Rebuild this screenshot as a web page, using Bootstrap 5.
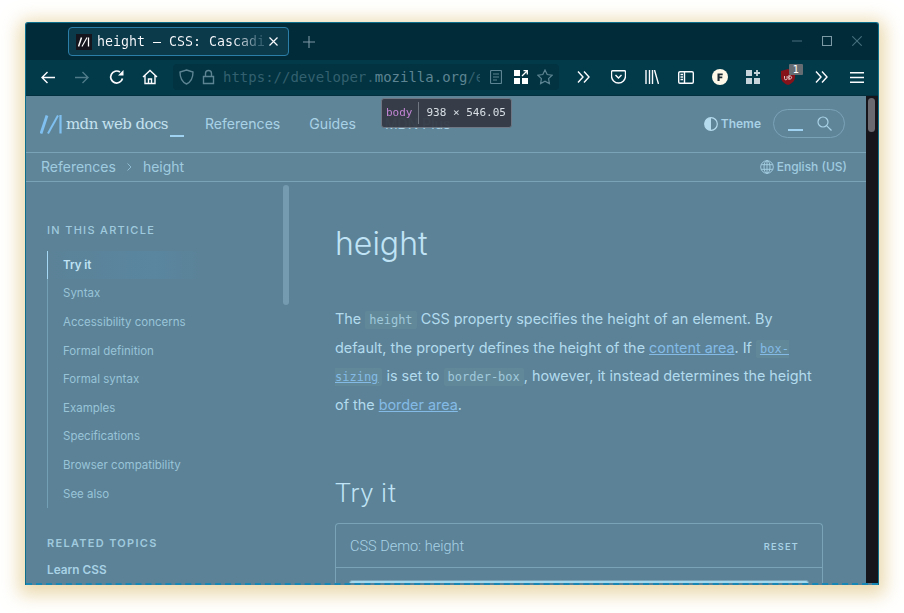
<!doctype html>
<html lang="en"><head><meta charset="utf-8"><title>height</title>
<link href="https://cdn.jsdelivr.net/npm/bootstrap@5.3.0/dist/css/bootstrap.min.css" rel="stylesheet">
<style>
html,body{height:613px;overflow:hidden;background:#fff}
body{padding:22px 25px 28px;font-family:Inter,"Liberation Sans",sans-serif;color:#a9d2e6}
.win{width:854px;height:563px;border-radius:3px 3px 0 0;overflow:hidden;box-shadow:0 4px 18px 6px rgba(224,196,130,.65);background:#5b8297;border:1px solid #0d6f8c;border-bottom:0;position:relative}
.tabbar{height:37px;background:#022b3a;padding-left:42px;color:#fbfbfe}
.tabx{width:221px;height:29px;border:1px solid #2b7ea8;border-radius:4px;background:#0b3a4b;font:13.3px/27px "DejaVu Sans Mono",monospace;padding-left:7px;gap:5px;margin-top:4px;white-space:nowrap;overflow:hidden}
.fav{width:16px;height:16px;background:#15151d;flex:none}
.tabname{background:linear-gradient(90deg,#fbfbfe 0,#fbfbfe 82%,#3d6676 97%);-webkit-background-clip:text;background-clip:text;color:transparent;width:167px;overflow:hidden}
.toolbar{height:36px;background:#023a4a;border-bottom:1px solid #02303f;padding-left:15px}
.urlbar{width:386px;height:26px;background:#023340;border-radius:4px;margin-left:15px;padding-left:6px;font:14px "DejaVu Sans Mono",monospace;color:#33606f;white-space:nowrap;overflow:hidden}
.urlbar b{font-weight:400;color:#5d8492}
.urltxt{width:257px;overflow:hidden}
.ico{display:block;flex:none;fill:none;stroke:#fbfbfe;stroke-width:1.4}
.page{height:490px;overflow:hidden;position:relative;border-bottom:2px dashed #1787b5}
.mainp{width:841px;height:490px;overflow:hidden;position:relative;font-family:Inter,sans-serif}
.sbar{position:absolute;right:0;top:0;width:12px;height:490px;background:#15151b}
.sbar i{position:absolute;left:2px;top:2px;width:7px;height:34px;border-radius:4px;background:#6a6a70}
.mdnhead{height:57px;background:#5f8599;border-bottom:1px solid #7ba3b8;padding:0 22px 0 14px}
.logotxt{font:500 15px "DejaVu Serif","Liberation Serif",serif;letter-spacing:-.6px;color:#c5e2ef;margin-left:4px;padding-top:4px;white-space:nowrap}
.cur{display:inline-block;width:14px;height:2px;background:#9fd1f0;margin-left:2px;vertical-align:-8px}
.mnav{font-size:14.1px;color:#a9d2e6;margin-left:21px;gap:29px}
.themex{font-size:12px;font-weight:600;color:#a9d2e6;gap:3px}
.srch{width:72px;height:29px;border:1px solid #7ba3b8;border-radius:15px;margin-left:12px;padding:0 12px 0 14px}
.srch i{display:block;width:15px;height:2px;background:#9fd1f0;margin-top:12px}
.crumb{height:29px;background:#5f8599;border-bottom:1px solid #7ba3b8;padding:0 20px 0 15px;font-size:14px;color:#a0cce0}
.chev{margin:0 11px}
.lang{font-size:12px;font-weight:500;gap:3px}
.cols{height:404px}
.side{width:309px;flex:none;position:relative;padding:41px 0 0 21px;font-size:11.5px;color:#99c4d8}
.sthumb{position:absolute;left:257px;top:3px;width:6px;height:120px;border-radius:3px;background:#749bb0}
.eyebrow{font-size:11px;font-weight:500;letter-spacing:1.3px;line-height:14px;color:#a0cade}
.tocl{border-left:1px solid #74a0b5;margin:14px 0 0;padding:0;list-style:none;position:relative}
.tocl li{height:28.6px;line-height:29.6px;padding-left:15px}
.tocl li.on{font-weight:600;color:#c0e4f5;border-left:1px solid #a5d8f5;margin-left:-1px;background:linear-gradient(90deg,#5b8297,#5a86a0 70%,#5b8297);width:154px;line-height:29px}
.learn{font-size:11.8px;font-weight:600;line-height:15px;margin-top:13px;color:#a9d2e6}
.art{width:488px;flex:none;padding-top:43px}
.art h1{font:300 32px/38px Inter,sans-serif;color:#c0e4f5;margin:0 0 42px}
.art p{font:400 14.4px/28.8px Inter,sans-serif;color:#b3dbee;margin:0 0 57px}
.art code{font:12px "DejaVu Sans Mono",monospace;background:#618899;padding:2px 4px;color:#a0c9db;border-radius:2px}
.art a{color:#84bbe6}
.art a code{color:#84bbe6;text-decoration:underline}
.art h2{font:300 26.6px/32px Roboto,sans-serif;letter-spacing:.7px;color:#c0e4f5;margin:0 0 14px}
.demo{height:90px;border:1px solid #7ba3b8;border-bottom:0;border-radius:4px 4px 0 0}
.dhead{height:44px;border-bottom:1px solid #7ba3b8;padding:2px 23px 0 14px;font:300 14.5px Roboto,sans-serif}
.dhead span{font:500 9.5px Roboto,sans-serif;letter-spacing:1.4px}
.dinner{height:20px;margin:12px 13px 0;background:#a4d8ec;border:1px solid #7ba3b8;border-radius:3px 3px 0 0}
.tip{position:absolute;left:355px;top:2px;width:131px;height:30px;background:#343a45;border:1px solid #6e7681;border-radius:3px;font:11px/28px "DejaVu Sans Mono",monospace;color:#dfe3e8;padding-left:4px;opacity:.95}
.tip em{font-style:normal;color:#c985d8;padding-right:5px;border-right:1px solid #70767f;margin-right:8px;display:inline-block;line-height:22px}
.ub{position:absolute;left:8px;top:-5px;width:14px;height:11px;text-align:center;background:#666d72;color:#fff;font:10px/11px "DejaVu Sans",sans-serif;border-radius:1px}
</style></head><body>
<div class="win d-flex flex-column">
<div class="tabbar d-flex align-items-start">
 <div class="tabx d-flex align-items-center">
  <span class="fav d-flex align-items-center justify-content-center"><svg width="12" height="10" viewBox="0 0 12 10" fill="none" stroke="#fff"><path d="M.5 9.500 3.500.5" stroke-width="1.500"/><path d="M4 9.500 9 .5" stroke-width="1.100"/><path d="M10.500 .5V9.500" stroke-width="1.300"/></svg></span>
  <span class="tabname">height – CSS: Cascadia</span>
  <svg class="ico" width="9" height="9" viewBox="0 0 9 9" style="stroke-width:1.2"><path d="M.5.5l8 8M8.5.5l-8 8"/></svg>
 </div>
 <svg class="ico" style="margin:13px 0 0 14px;stroke:#7d98a4;stroke-width:1.1" width="12" height="12" viewBox="0 0 12 12"><path d="M6 0v12M0 6h12"/></svg>
 <div class="ms-auto d-flex align-items-center" style="gap:20px;margin:13px 16px 0 0">
  <svg class="ico" style="stroke:#466f7d;stroke-width:1.1" width="10" height="10" viewBox="0 0 10 10"><path d="M0 5h10"/></svg>
  <svg class="ico" style="stroke:#7c9aa6;stroke-width:1.1" width="10" height="10" viewBox="0 0 10 10"><path d="M.5.5h9v9H.5z"/></svg>
  <svg class="ico" style="stroke:#466f7d;stroke-width:1.1" width="10" height="10" viewBox="0 0 10 10"><path d="M.3.3l9.400 9.400M9.700.3l-9.400 9.400"/></svg>
 </div>
</div>
<div class="toolbar d-flex align-items-center">
 <svg class="ico" width="15" height="13" viewBox="0 0 15 13"><path d="M14 6.500H1M6.500 1 1 6.500l5.500 5.500"/></svg>
 <svg class="ico" style="margin-left:18px;stroke:#4f7a88" width="15" height="13" viewBox="0 0 15 13"><path d="M1 6.500h13M8.500 1l5.500 5.500-5.500 5.500"/></svg>
 <svg class="ico" style="margin-left:20px;stroke-width:1.7" width="16" height="16" viewBox="0 0 16 16"><path d="M13.500 9.500A6 6 0 1 1 11 3"/><path d="M14.500 1v5.500H9z" fill="#fbfbfe" stroke="none"/></svg>
 <svg class="ico" style="margin-left:17px" width="16" height="16" viewBox="0 0 16 16"><path d="M1 8 8 1.500 15 8M3 6.500V14.500h10V6.500M6.500 14.500V10h3v4.500"/></svg>
 <div class="urlbar d-flex align-items-center">
  <svg class="ico" style="stroke:#5d8492" width="15" height="16" viewBox="0 0 15 16"><path d="M7.500 1 14 3c0 6-2 10-6.500 12C3 13 1 9 1 3z"/></svg>
  <svg class="ico" style="stroke:#5d8492;margin:0 8px" width="13" height="16" viewBox="0 0 13 16"><path d="M1.500 7.500h10v7h-10zM3.500 7.500V4.500a3 3 0 0 1 6 0v3"/></svg>
  <span class="urltxt">https://developer.<b>mozilla.org</b>/en-US/docs</span>
  <svg class="ico" style="stroke:#5d8492;stroke-width:1.200;margin-left:10px" width="12" height="14" viewBox="0 0 12 14"><path d="M1.500.5h9a1 1 0 0 1 1 1v11a1 1 0 0 1-1 1h-9a1 1 0 0 1-1-1v-11a1 1 0 0 1 1-1zM3 4h6M3 7h6M3 10h4"/></svg>
  <svg style="flex:none;margin-left:12px" width="14" height="14" viewBox="0 0 14 14"><path d="M0 0h6v6H0zM0 8h6v6H0zM8 8h6v6H8z" fill="#fff"/><path d="M8 6 13 1M9.500 .7H13.300V4.500" stroke="#fff" stroke-width="1.300" fill="none"/></svg>
  <svg class="ico" style="margin-left:9px;stroke:#5d8492;stroke-width:1.200" width="16" height="16" viewBox="0 0 16 16"><path d="m8 1 2.200 4.500 4.900.7-3.500 3.500.8 4.900L8 12.300l-4.400 2.300.8-4.900L.9 6.200l4.900-.7z"/></svg>
 </div>
 <svg class="ico" style="margin-left:18px" width="13" height="12" viewBox="0 0 13 12"><path d="M1 .5 6 6 1 11.500M7 .5 12 6l-5 5.500"/></svg>
 <svg class="ico" style="margin-left:21px" width="15" height="14" viewBox="0 0 15 14"><path d="M1.500.7h12a1 1 0 0 1 1 1V6a7 7 0 0 1-14 0V1.700a1 1 0 0 1 1-1zM4.500 5 7.500 8l3-3"/></svg>
 <svg class="ico" style="margin-left:19px" width="14" height="14" viewBox="0 0 14 14"><path d="M1 0v14M4.500 0v14M7.500 0v14M9.500 0 13.500 14"/></svg>
 <svg class="ico" style="margin-left:19px" width="16" height="13" viewBox="0 0 16 13"><path d="M2 .7h12a1.300 1.300 0 0 1 1.300 1.300v9a1.300 1.300 0 0 1-1.300 1.300H2A1.300 1.300 0 0 1 .7 11V2A1.300 1.300 0 0 1 2 .7zM6.500.7v11.600M2.500 3.500h2.500M2.500 6h2.500M2.500 8.500h2.500"/></svg>
 <svg style="margin-left:18px;flex:none;display:block" width="16" height="16" viewBox="0 0 16 16"><circle cx="8" cy="8" r="8" fill="#fdf8e8"/><path d="M5.500 12V4.500h5.200v1.800H7.600v1.300h2.700v1.700H7.600V12z" fill="#1c2b33"/></svg>
 <svg style="margin-left:18px;flex:none;display:block" width="14" height="14" viewBox="0 0 14 14"><path d="M0 0h6v6H0zM0 8h6v6H0zM8 8h6v6H8z" fill="#c5d4da"/><path d="M8 3h6M11 0v6" stroke="#c5d4da" stroke-width="1.800"/></svg>
 <span class="position-relative d-block" style="margin-left:21px;width:14px;height:16px"><svg class="d-block" width="14" height="16" viewBox="0 0 14 16"><path d="M7 0 14 2v6c0 4-3 6.500-7 8-4-1.500-7-4-7-8V2z" fill="#86121a"/><path d="M3.500 7v2.500a1.300 1.300 0 0 0 2.600 0V7M8 6v5M8 9.500a1.500 1.500 0 1 1 .1.100" fill="none" stroke="#e9d9d9" stroke-width=".9"/></svg><span class="ub">1</span></span>
 <svg class="ico" style="margin-left:20px" width="13" height="12" viewBox="0 0 13 12"><path d="M1 .5 6 6 1 11.500M7 .5 12 6l-5 5.500"/></svg>
 <svg class="ico" style="margin-left:22px" width="14" height="11" viewBox="0 0 14 11"><path d="M0 .7h14M0 5.500h14M0 10.300h14"/></svg>
</div>
<div class="page">
<div class="mainp">
 <div class="mdnhead d-flex align-items-center">
  <svg width="22" height="19" viewBox="0 0 22 19" style="flex:none;margin-top:1px" fill="none" stroke="#7fc0f0"><path d="M1 18.500 7 .5" stroke-width="2.800"/><path d="M8 18.500 18 .5" stroke-width="2"/><path d="M20.500 0v18.500" stroke-width="2.200"/></svg>
  <span class="logotxt">mdn web docs<span class="cur"></span></span>
  <div class="mnav d-flex"><span>References</span><span>Guides</span><span>MDN Plus</span></div>
  <div class="themex d-flex align-items-center ms-auto"><svg width="14" height="14" viewBox="0 0 14 14"><circle cx="7" cy="7" r="6.300" fill="none" stroke="#b5dcee" stroke-width="1.200"/><path d="M7 .7a6.300 6.300 0 0 0 0 12.600z" fill="#b5dcee"/></svg>Theme</div>
  <div class="srch d-flex justify-content-between align-items-center"><i></i><svg width="15" height="15" viewBox="0 0 15 15" fill="none" stroke="#a9d2e6" stroke-width="1.200"><circle cx="6" cy="6" r="5"/><path d="m9.800 9.800 4.700 4.700"/></svg></div>
 </div>
 <div class="crumb d-flex align-items-center"><span>References</span><svg class="chev" width="5" height="8" viewBox="0 0 5 8" fill="none" stroke="#8fbcd0"><path d="m.5.500 3.500 3.500-3.500 3.500"/></svg><span>height</span>
  <span class="lang ms-auto d-flex align-items-center"><svg width="14" height="14" viewBox="0 0 14 14" fill="none" stroke="#a9d2e6" stroke-width=".9"><circle cx="7" cy="7" r="6.300"/><ellipse cx="7" cy="7" rx="3" ry="6.300"/><path d="M1.200 4.700h11.600M1.200 9.300h11.600M7 .7v12.600"/></svg>English (US)</span></div>
 <div class="cols d-flex">
  <aside class="side"><span class="sthumb"></span>
   <div class="eyebrow">IN THIS ARTICLE</div>
   <ul class="tocl"><li class="on">Try it</li><li>Syntax</li><li>Accessibility concerns</li><li>Formal definition</li><li>Formal syntax</li><li>Examples</li><li>Specifications</li><li>Browser compatibility</li><li>See also</li></ul>
   <div class="eyebrow" style="margin-top:28px;font-weight:600">RELATED TOPICS</div>
   <div class="learn">Learn CSS</div>
  </aside>
  <main class="art">
   <h1>height</h1>
   <p>The <code>height</code> CSS property specifies the height of an element. By default, the property defines the height of the <a href="#">content area</a>. If <a href="#"><code>box-sizing</code></a> is set to <code>border-box</code>, however, it instead determines the height of the <a href="#">border area</a>.</p>
   <h2>Try it</h2>
   <div class="demo"><div class="dhead d-flex align-items-center justify-content-between">CSS Demo: height<span>RESET</span></div><div class="dinner"></div></div>
  </main>
 </div>
 <div class="tip"><em>body</em>938 × 546.05</div>
</div>
<div class="sbar"><i></i></div>
</div>
</div>
</body></html>
